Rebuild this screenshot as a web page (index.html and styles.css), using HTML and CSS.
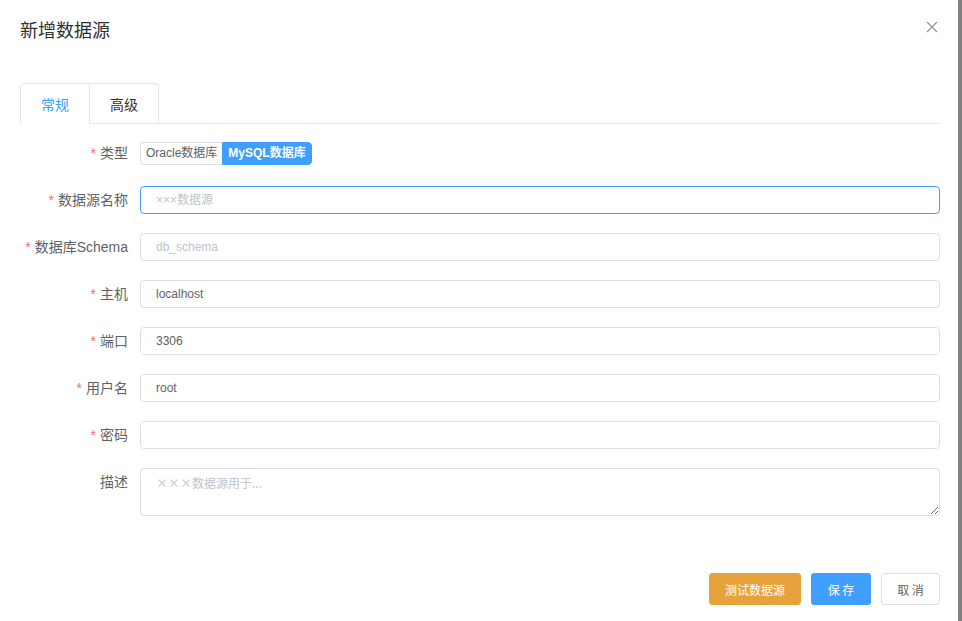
FILE: index.html
```html
<!DOCTYPE html>
<html lang="zh-CN">
<head>
<meta charset="utf-8">
<title>新增数据源</title>
<link rel="stylesheet" href="styles.css">
</head>
<body>
<div class="dialog">
  <div class="dialog-header">
    <span class="dialog-title">新增数据源</span>
    <button class="dialog-close" type="button" aria-label="关闭">
      <svg width="12" height="12" viewBox="0 0 12 12"><path d="M1 1L11 11M11 1L1 11" stroke="#909399" stroke-width="1.2" fill="none"/></svg>
    </button>
  </div>
  <div class="dialog-body">
    <div class="tabs-header">
      <div class="tabs-nav">
        <div class="tab active">常规</div>
        <div class="tab">高级</div>
      </div>
    </div>
    <form class="form">
      <div class="form-item">
        <label class="form-label"><span class="req">*</span>类型</label>
        <div class="form-content">
          <div class="radio-group">
            <span class="radio-btn">Oracle数据库</span>
            <span class="radio-btn checked">MySQL数据库</span>
          </div>
        </div>
      </div>
      <div class="form-item">
        <label class="form-label"><span class="req">*</span>数据源名称</label>
        <div class="form-content"><input class="input focus" placeholder="×××数据源"></div>
      </div>
      <div class="form-item">
        <label class="form-label"><span class="req">*</span>数据库Schema</label>
        <div class="form-content"><input class="input" placeholder="db_schema"></div>
      </div>
      <div class="form-item">
        <label class="form-label"><span class="req">*</span>主机</label>
        <div class="form-content"><input class="input" value="localhost"></div>
      </div>
      <div class="form-item">
        <label class="form-label"><span class="req">*</span>端口</label>
        <div class="form-content"><input class="input" value="3306"></div>
      </div>
      <div class="form-item">
        <label class="form-label"><span class="req">*</span>用户名</label>
        <div class="form-content"><input class="input" value="root"></div>
      </div>
      <div class="form-item">
        <label class="form-label"><span class="req">*</span>密码</label>
        <div class="form-content"><input class="input" type="password"></div>
      </div>
      <div class="form-item">
        <label class="form-label">描述</label>
        <div class="form-content"><textarea class="textarea" placeholder="×××数据源用于..."></textarea></div>
      </div>
    </form>
  </div>
  <div class="dialog-footer">
    <button class="btn btn-warning" type="button">测试数据源</button>
    <button class="btn btn-primary" type="button">保 存</button>
    <button class="btn btn-default" type="button">取 消</button>
  </div>
</div>
</body>
</html>
```

FILE: styles.css
```css
html, body {
  margin: 0;
  padding: 0;
}
body {
  background: #808080;
  font-family: "Liberation Sans", "Noto Sans CJK SC", sans-serif;
  color: #606266;
}
.dialog {
  width: 958px;
  height: 621px;
  background: #fff;
  box-sizing: border-box;
  overflow: hidden;
  display: flex;
  flex-direction: column;
}
.dialog-header {
  height: 83px;
  box-sizing: border-box;
  padding: 19px 20px 0 20px;
  display: flex;
  justify-content: space-between;
  align-items: flex-start;
}
.dialog-title {
  font-size: 18px;
  line-height: 24px;
  color: #303133;
}
.dialog-close {
  margin: 2px 0 0 0;
  padding: 0;
  border: none;
  background: transparent;
  width: 12px;
  height: 12px;
  display: flex;
}
.dialog-body {
  padding: 0 18px 0 20px;
}
.tabs-header {
  border-bottom: 1px solid #e4e7ed;
  height: 40px;
}
.tabs-nav {
  display: inline-flex;
  border: 1px solid #e4e7ed;
  border-bottom: none;
  border-radius: 4px 4px 0 0;
  box-sizing: border-box;
  height: 41px;
}
.tab {
  height: 40px;
  line-height: 40px;
  padding: 0 20px;
  font-size: 14px;
  color: #303133;
  font-family: "Noto Sans CJK SC", sans-serif;
  border-left: 1px solid #e4e7ed;
  border-bottom: 1px solid transparent;
}
.tab:first-child {
  border-left: none;
}
.tab.active {
  color: #409eff;
  border-bottom-color: #fff;
  background: #fff;
}
.form {
  padding-top: 15px;
  display: flex;
  flex-direction: column;
  gap: 19px;
}
.form-item {
  display: flex;
  align-items: flex-start;
}
.form-label {
  width: 120px;
  flex: none;
  box-sizing: border-box;
  padding-right: 12px;
  text-align: right;
  font-size: 14px;
  line-height: 28px;
  color: #606266;
}
.req {
  color: #f56c6c;
  margin-right: 4px;
}
.form-content {
  flex: 1;
  min-height: 28px;
  display: flex;
  align-items: center;
}
.radio-group {
  display: flex;
}
.radio-btn {
  font-size: 12px;
  height: 23px;
  line-height: 21px;
  box-sizing: border-box;
  padding: 0 5px;
  border: 1px solid #dcdfe6;
  color: #606266;
  background: #fff;
}
.radio-btn:first-child {
  border-radius: 4px 0 0 4px;
  border-right: none;
}
.radio-btn.checked {
  background: #409eff;
  border-color: #409eff;
  color: #fff;
  font-weight: bold;
  border-radius: 0 4px 4px 0;
}
.input {
  width: 100%;
  height: 28px;
  box-sizing: border-box;
  border: 1px solid #dcdfe6;
  border-radius: 4px;
  padding: 0 15px;
  font-size: 12px;
  font-family: "Liberation Sans", "Noto Sans CJK SC", sans-serif;
  color: #606266;
  outline: none;
  background: #fff;
}
.input.focus {
  border-color: #409eff;
}
.input::placeholder {
  color: #c0c4cc;
}
.textarea {
  width: 100%;
  height: 48px;
  box-sizing: border-box;
  border: 1px solid #dcdfe6;
  border-radius: 4px;
  padding: 5px 15px;
  font-size: 12px;
  line-height: 18px;
  font-family: "Noto Sans CJK SC", sans-serif;
  color: #606266;
  outline: none;
  resize: vertical;
  display: block;
}
.textarea::placeholder {
  color: #c0c4cc;
  letter-spacing: 0;
}
.dialog-footer {
  margin-top: auto;
  padding: 0 18px 16px 20px;
  display: flex;
  justify-content: flex-end;
  gap: 10px;
}
.btn {
  height: 32px;
  box-sizing: border-box;
  padding: 0 15px;
  border-radius: 3px;
  font-size: 12px;
  font-family: "Noto Sans CJK SC", sans-serif;
  border: 1px solid #dcdfe6;
  cursor: pointer;
}
.btn-warning {
  background: #e6a23c;
  border-color: #e6a23c;
  color: #fff;
  width: 92px;
}
.btn-primary {
  background: #409eff;
  border-color: #409eff;
  color: #fff;
  width: 60px;
}
.btn-default {
  background: #fff;
  color: #606266;
  width: 59px;
}
```
